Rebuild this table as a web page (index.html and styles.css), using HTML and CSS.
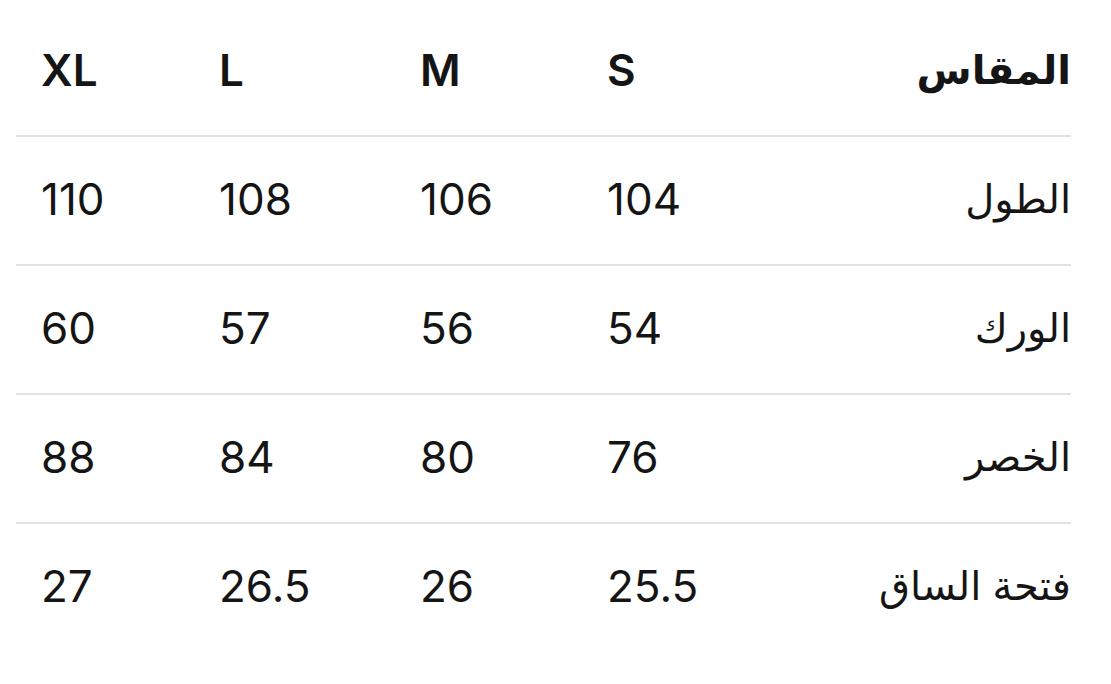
FILE: index.html
```html
<!DOCTYPE html>
<html lang="ar" dir="rtl">
<head>
<meta charset="utf-8">
<link rel="stylesheet" href="styles.css">
</head>
<body>
<div class="size-table">
  <div class="row head">
    <div class="cell label">المقاس</div>
    <div class="cell num">S</div>
    <div class="cell num">M</div>
    <div class="cell num">L</div>
    <div class="cell num">XL</div>
  </div>
  <div class="row">
    <div class="cell label">الطول</div>
    <div class="cell num">104</div>
    <div class="cell num">106</div>
    <div class="cell num">108</div>
    <div class="cell num">110</div>
  </div>
  <div class="row">
    <div class="cell label">الورك</div>
    <div class="cell num">54</div>
    <div class="cell num">56</div>
    <div class="cell num">57</div>
    <div class="cell num">60</div>
  </div>
  <div class="row">
    <div class="cell label">الخصر</div>
    <div class="cell num">76</div>
    <div class="cell num">80</div>
    <div class="cell num">84</div>
    <div class="cell num">88</div>
  </div>
  <div class="row last">
    <div class="cell label">فتحة الساق</div>
    <div class="cell num">25.5</div>
    <div class="cell num">26</div>
    <div class="cell num">26.5</div>
    <div class="cell num">27</div>
  </div>
</div>
</body>
</html>
```
FILE: styles.css
```css
html, body {
  margin: 0;
  padding: 0;
  background: #ffffff;
}
body {
  font-family: Inter, "DejaVu Sans", sans-serif;
  color: #151515;
}
.size-table {
  margin: 8px 40px 0 16px;
}
.row {
  display: grid;
  grid-template-columns: 271px 193px 187px 201px 178px;
  padding-left: 25px;
  padding-bottom: 4px;
  height: 123px;
  align-items: center;
  border-bottom: 2px solid #e2e2e2;
  font-size: 44px;
}
.row.last {
  border-bottom: none;
}
.head {
  font-weight: 600;
}
.cell.label {
  text-align: right;
  font-size: 40px;
}
.cell.num {
  text-align: left;
  direction: ltr;
}
```
